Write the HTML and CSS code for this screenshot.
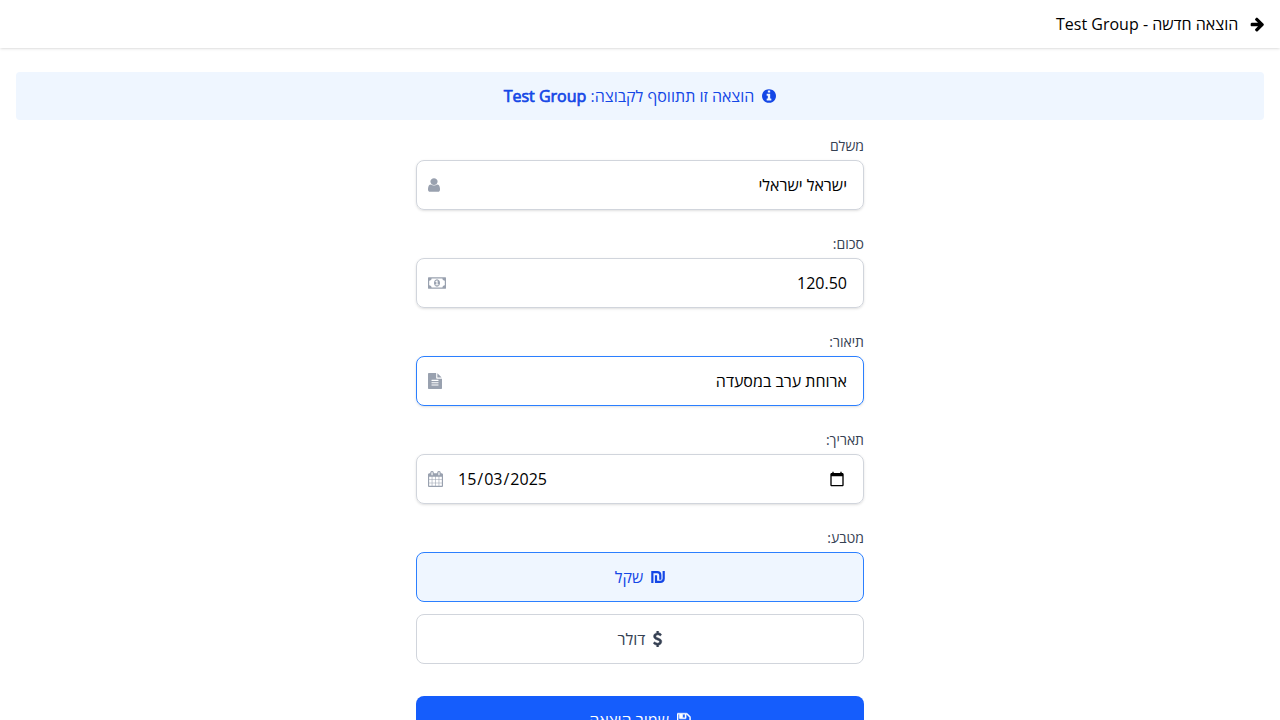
FILE: index.html
```html
<!DOCTYPE html>
<html lang="he" dir="rtl">
<head>
<meta charset="utf-8">
<title>הוצאה חדשה</title>
<link rel="stylesheet" href="styles.css">
</head>
<body>
<header class="topbar">
  <svg class="icon icon-arrow" viewBox="128 0 1536 1792"><path d="M1675 960q0 54-37 91l-651 651q-39 37-91 37-51 0-90-37l-75-75q-38-38-38-91t38-91l293-293h-704q-52 0-84.5-37.5t-32.5-90.5v-128q0-53 32.5-90.5t84.5-37.5h704l-293-294q-38-36-38-90t38-90l75-75q38-38 90-38 53 0 91 38l651 651q37 35 37 90z"/></svg>
  <span>הוצאה חדשה - Test Group</span>
</header>
<main class="page">
  <div class="notice">
    <svg class="icon icon-info" preserveAspectRatio="none" viewBox="128 0 1536 1792"><path d="M1152 1376v-160q0-14-9-23t-23-9h-96v-512q0-14-9-23t-23-9h-320q-14 0-23 9t-9 23v160q0 14 9 23t23 9h96v320h-96q-14 0-23 9t-9 23v160q0 14 9 23t23 9h448q14 0 23-9t9-23zm-128-896v-160q0-14-9-23t-23-9h-192q-14 0-23 9t-9 23v160q0 14 9 23t23 9h192q14 0 23-9t9-23zm640 416q0 209-103 385.5t-279.5 279.5-385.5 103-385.5-103-279.5-279.5-103-385.5 103-385.5 279.5-279.5 385.5-103 385.5 103 279.5 279.5 103 385.5z"/></svg>
    <span>הוצאה זו תתווסף לקבוצה: <b class="group">Test Group</b></span>
  </div>
  <form class="form">
    <div class="field">
      <label class="label">משלם</label>
      <div class="control">
        <input class="input" type="text" value="ישראל ישראלי">
        <svg class="icon icon-user" preserveAspectRatio="none" viewBox="256 0 1280 1792"><path d="M1536 1399q0 109-62.5 187t-150.5 78h-854q-88 0-150.5-78t-62.5-187q0-85 8.5-160.5t31.5-152 58.5-131 94-89 134.5-34.5q131 128 313 128t313-128q76 0 134.5 34.5t94 89 58.5 131 31.5 152 8.5 160.5zm-256-887q0 159-112.5 271.5t-271.5 112.5-271.5-112.5-112.5-271.5 112.5-271.5 271.5-112.5 271.5 112.5 112.5 271.5z"/></svg>
      </div>
    </div>
    <div class="field">
      <label class="label">סכום:</label>
      <div class="control">
        <input class="input" type="text" value="120.50">
        <svg class="icon icon-money" preserveAspectRatio="none" viewBox="0 0 1920 1792"><path d="M768 1152h384v-96h-128v-448h-114l-148 137 77 80q42-37 55-57h2v288h-128v96zm512-256q0 70-21 142t-59.5 134-101.5 101-138 39-138-39-101.5-101-59.5-134-21-142 21-142 59.5-134 101.5-101 138-39 138 39 101.5 101 59.5 134 21 142zm512 256v-512q-106 0-181-75t-75-181h-1152q0 106-75 181t-181 75v512q106 0 181 75t75 181h1152q0-106 75-181t181-75zm128-832v1152q0 26-19 45t-45 19h-1792q-26 0-45-19t-19-45v-1152q0-26 19-45t45-19h1792q26 0 45 19t19 45z"/></svg>
      </div>
    </div>
    <div class="field">
      <label class="label">תיאור:</label>
      <div class="control control-active">
        <input class="input" type="text" value="ארוחת ערב במסעדה">
        <svg class="icon icon-file" preserveAspectRatio="none" viewBox="128 0 1536 1792"><path d="M1596 476q14 14 28 36h-472v-472q22 14 36 28zm-476 164h544v1056q0 40-28 68t-68 28h-1344q-40 0-68-28t-28-68v-1600q0-40 28-68t68-28h800v544q0 40 28 68t68 28zm160 736v-64q0-14-9-23t-23-9h-704q-14 0-23 9t-9 23v64q0 14 9 23t23 9h704q14 0 23-9t9-23zm0-256v-64q0-14-9-23t-23-9h-704q-14 0-23 9t-9 23v64q0 14 9 23t23 9h704q14 0 23-9t9-23zm0-256v-64q0-14-9-23t-23-9h-704q-14 0-23 9t-9 23v64q0 14 9 23t23 9h704q14 0 23-9t9-23z"/></svg>
      </div>
    </div>
    <div class="field">
      <label class="label">תאריך:</label>
      <div class="control">
        <svg class="picker" viewBox="0 0 24 24"><path d="M20 3h-1V1h-2v2H7V1H5v2H4c-1.100 0-2 .9-2 2v16c0 1.100.9 2 2 2h16c1.100 0 2-.9 2-2V5c0-1.100-.9-2-2-2zm0 18H4V8h16v13z"/></svg>
        <div class="date" dir="ltr"><span class="part">15</span><span>/</span><span class="part">03</span><span>/</span><span class="part">2025</span></div>
        <svg class="icon icon-calendar" preserveAspectRatio="none" viewBox="64 0 1664 1792"><path d="M192 1664h288v-288h-288v288zm352 0h320v-288h-320v288zm-352-352h288v-320h-288v320zm352 0h320v-320h-320v320zm-352-384h288v-288h-288v288zm736 736h320v-288h-320v288zm-384-736h320v-288h-320v288zm768 736h288v-288h-288v288zm-384-352h320v-320h-320v320zm-352-864v-288q0-13-9.500-22.500t-22.500-9.500h-64q-13 0-22.500 9.500t-9.500 22.500v288q0 13 9.500 22.500t22.500 9.500h64q13 0 22.500-9.500t9.500-22.500zm736 864h288v-320h-288v320zm-384-384h320v-288h-320v288zm384 0h288v-288h-288v288zm32-480v-288q0-13-9.500-22.500t-22.500-9.500h-64q-13 0-22.500 9.500t-9.500 22.500v288q0 13 9.500 22.500t22.500 9.500h64q13 0 22.500-9.500t9.500-22.500zm384-64v1280q0 52-38 90t-90 38h-1408q-52 0-90-38t-38-90v-1280q0-52 38-90t90-38h128v-96q0-66 47-113t113-47h64q66 0 113 47t47 113v96h384v-96q0-66 47-113t113-47h64q66 0 113 47t47 113v96h128q52 0 90 38t38 90z"/></svg>
      </div>
    </div>
    <div class="field">
      <label class="label">מטבע:</label>
      <div class="options">
        <button type="button" class="option option-selected">
          <svg class="icon icon-ils" viewBox="0 0 14 16"><path d="M1.350 14V3.100H6.300Q9.300 3.100 9.300 6.100V10.700M5 6.200V12.900H9.200Q12.700 12.900 12.700 9.600V2"/></svg>
          <span>שקל</span>
        </button>
        <button type="button" class="option">
          <svg class="icon icon-usd" viewBox="384 0 1024 1792"><path d="M1362 1185q0 153-99.500 263.500t-258.500 136.500v175q0 14-9 23t-23 9h-135q-13 0-22.500-9.500t-9.500-22.500v-175q-66-9-127.500-31t-101.500-44.500-74-48-46.500-37.500-17.500-18q-17-21-2-41l103-135q7-10 23-12 15-2 24 9l2 2q113 99 243 125 37 8 74 8 81 0 142.500-43t61.500-122q0-28-15-53t-33.500-42-58.500-37.500-66-32-80-32.500q-39-16-61.500-25t-61.500-26.500-62.500-31-56.500-35.500-53.500-42.500-43.500-49-35.500-58-21-66.500-8.500-78q0-138 98-242t255-134v-180q0-13 9.500-22.500t22.500-9.500h135q14 0 23 9t9 23v176q57 6 110.500 23t87 33.500 63.500 37.500 39 29 15 14q17 18 5 38l-81 146q-8 15-23 16-14 3-27-7-3-3-14.500-12t-39-26.500-58.500-32-74.500-26-85.500-11.500q-95 0-155 43t-60 111q0 26 8.500 48t29.500 41.500 39.500 33 56 31 60.500 27 70 27.500q53 20 81 31.500t76 35 75.500 42.500 62 50 53 63.500 31.500 76.500 13 94z"/></svg>
          <span>דולר</span>
        </button>
      </div>
    </div>
    <button type="button" class="save">
      <svg class="icon icon-save" viewBox="128 0 1536 1792"><path d="M512 1536h768v-384h-768v384zm896 0h128v-896q0-14-10-38.500t-20-34.500l-281-281q-10-10-34-20t-39-10v416q0 40-28 68t-68 28h-576q-40 0-68-28t-28-68v-416h-128v1280h128v-416q0-40 28-68t68-28h832q40 0 68 28t28 68v416zm-384-928v-320q0-13-9.500-22.500t-22.500-9.500h-192q-13 0-22.500 9.500t-9.500 22.500v320q0 13 9.500 22.500t22.500 9.500h192q13 0 22.500-9.500t9.500-22.500zm640 32v928q0 40-28 68t-68 28h-1344q-40 0-68-28t-28-68v-1344q0-40 28-68t68-28h928q40 0 88 20t76 48l280 280q28 28 48 76t20 88z"/></svg>
      <span>שמור הוצאה</span>
    </button>
  </form>
</main>
</body>
</html>
```
FILE: styles.css
```css
* { box-sizing: border-box; }
html, body { margin: 0; height: 100%; overflow: hidden; }
body {
  background: #fff;
  color: #000;
  font: 16px/24px "Open Sans", "Noto Sans", sans-serif;
}
button, input { font: inherit; color: inherit; margin: 0; }
.icon { flex: none; height: 16px; fill: currentColor; display: block; }
.icon-arrow, .icon-save { width: 13.720px; }
.icon-info, .icon-file { width: 14px; }
.icon-user { width: 12px; }
.icon-money { width: 18px; }
.icon-calendar { width: 15px; }
.icon-usd { width: 9.140px; stroke: currentColor; stroke-width: 60; }
.icon-save { stroke: currentColor; stroke-width: 50; }
.icon-ils { width: 14px; fill: none; stroke: currentColor; stroke-width: 2.200; }

.topbar {
  display: flex;
  align-items: center;
  gap: 12px;
  height: 48px;
  padding: 0 16px;
  box-shadow: 0 1px 3px rgba(0,0,0,.1), 0 1px 2px -1px rgba(0,0,0,.1);
}
.page { padding: 24px 16px 0; }
.notice {
  display: flex;
  align-items: center;
  justify-content: center;
  gap: 8px;
  height: 48px;
  border-radius: 4px;
  background: #eff6ff;
  color: #1447e6;
}
.group { font-weight: 400; -webkit-text-stroke: .7px currentColor; }
.form { width: 448px; margin: 16px auto 0; }
.field { margin-bottom: 24px; }
.label { display: block; height: 20px; margin-bottom: 4px; font-size: 14px; line-height: 20px; color: #364153; }
.control {
  display: flex;
  align-items: center;
  height: 50px;
  padding: 0 16px 0 11px;
  border: 1px solid #d1d5dc;
  border-radius: 8px;
  box-shadow: 0 1px 3px rgba(0,0,0,.1), 0 1px 2px -1px rgba(0,0,0,.1);
}
.control-active { border-color: #2b7fff; }
.control .icon { color: #99a1af; }
.input { flex: 1; min-width: 0; height: 24px; padding: 0; border: 0; outline: 0; background: none; }
.date { display: flex; flex: 1; padding-left: 14px; }
.part { padding: 0 1px; }
.picker { flex: none; width: 16px; height: 16px; margin-right: 2px; }
.options { display: flex; flex-direction: column; gap: 12px; }
.option, .save {
  display: flex;
  align-items: center;
  justify-content: center;
  gap: 8px;
  width: 100%;
  height: 50px;
  padding: 0;
  border: 1px solid #d1d5dc;
  border-radius: 8px;
  background: #fff;
  color: #364153;
}
.option-selected { border-color: #2b7fff; background: #eff6ff; color: #1447e6; }
.save { height: 48px; margin-top: 32px; border: 0; background: #155dfc; color: #fff; }
```
